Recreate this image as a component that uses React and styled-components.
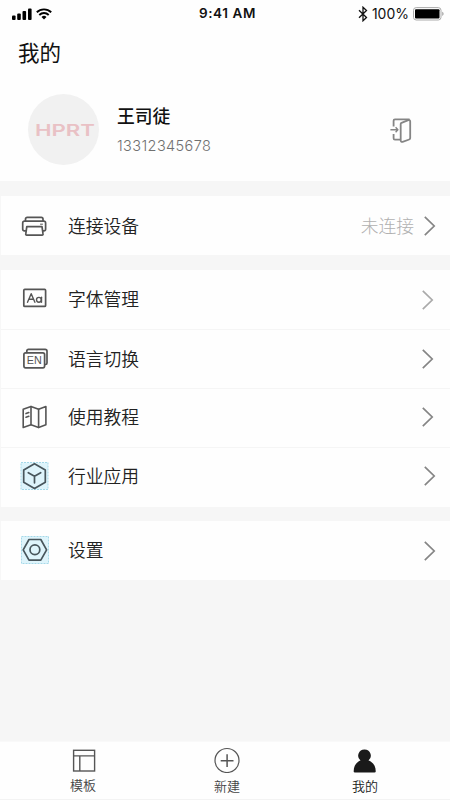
import React from 'react';
import styled, { createGlobalStyle } from 'styled-components';

const GlobalStyle = createGlobalStyle`
* {
    box-sizing: border-box;
}

body {
    margin: 0;
    background: #f6f6f6;
    font-family: "Liberation Sans", "Noto Sans CJK SC", sans-serif;
    color: #222;
}

svg {
    display: block;
    flex: none;
}
`;

const Screen = styled.div`
    display: flex;
    flex-direction: column;
    height: 800px;
    width: 450px;
    overflow: hidden;
`;

const StatusBar = styled.header`
    display: grid;
    grid-template-columns: 1fr auto 1fr;
    align-items: center;
    height: 27px;
    padding: 0 6px 0 12px;
    background: #fefefe;
    color: #111;
    font-family: Inter, "Liberation Sans", sans-serif;
    font-size: 14px;
    line-height: 27px;
`;

const Clock = styled.span`
    margin-left: -1px;
    font-weight: 600;
    font-size: 13.5px;
    letter-spacing: 0.6px;
`;

const StatusGroup = styled.div`
    display: flex;
    align-items: center;
    justify-content: ${props => props.$end ? 'flex-end' : 'flex-start'};
    gap: 4px;
`;

const Profile = styled.section`
    height: 154px;
    background: #fefefe;
`;

const Title = styled.h1`
    margin: 0;
    padding: 12px 18px 0;
    height: 66px;
    font-size: 21.5px;
    font-weight: 400;
    line-height: 31px;
    color: #111;
`;

const User = styled.div`
    display: flex;
    align-items: flex-start;
    padding: 0 37px 0 28px;
`;

const Avatar = styled.div`
    display: flex;
    align-items: center;
    justify-content: center;
    width: 71px;
    height: 71px;
    margin-top: 1px;
    border-radius: 50%;
    background: #f1f1f1;
`;

const UserText = styled.div`
    flex: 1;
    padding: 11px 0 0 18px;
`;

const UserName = styled.div`
    font-size: 17.8px;
    font-weight: 500;
    line-height: 26px;
    color: #111;
`;

const Phone = styled.div`
    padding-top: 6px;
    font-family: Inter, "Liberation Sans", sans-serif;
    font-size: 14.5px;
    font-weight: 300;
    line-height: 20px;
    letter-spacing: 0.4px;
    color: #707070;
`;

const LogoutIcon = styled.svg`
    width: 24px;
    height: 26px;
    margin-top: 25px;
    fill: none;
    stroke: #858585;
    stroke-width: 1.8;
    stroke-linejoin: round;
`;

const Group = styled.section`
    margin-top: ${props => props.$gap}px;
    background: #fefefe;
    border-left: 1px solid #f7f7f7;
`;

const Row = styled.div`
    display: flex;
    height: ${props => props.$height || 59}px;
    padding: 0 ${props => props.$right}px 0 17px;

    & + & {
        border-top: 1px solid #f5f5f5;
    }
`;

const RowIcon = styled.svg`
    width: 32px;
    height: 33px;
    margin-top: ${props => props.$first ? 13 : 12}px;
    fill: none;
    stroke: #555;
    stroke-width: 1.7;
    stroke-linejoin: round;
    stroke-linecap: round;

    text {
        fill: #555;
        stroke: none;
    }
`;

const RowLabel = styled.span`
    flex: 1;
    padding: ${props => props.$top}px 0 0 18px;
    font-size: 17.8px;
    font-weight: 350;
    line-height: 27px;
`;

const RowValue = styled.span`
    padding: 18px 10px 0 0;
    font-size: 17.8px;
    font-weight: 300;
    line-height: 27px;
    color: #b0b0b0;
`;

const ChevronIcon = styled.svg`
    width: 12px;
    height: 20px;
    margin-top: ${props => props.$top}px;
    fill: none;
    stroke: ${props => props.$pale ? '#aaa' : '#858585'};
    stroke-width: 1.7;
`;

const TabBar = styled.nav`
    display: flex;
    justify-content: space-between;
    height: 59px;
    margin-top: auto;
    padding: 0 71px 0 69px;
    background: #fefefe;
    border-top: 1px solid #f9f9f9;
    border-bottom: 1px solid #f3f3f3;
`;

const Tab = styled.div`
    display: flex;
    flex-direction: column;
    align-items: center;
    width: 28px;
    margin-left: ${props => props.$shift || 0}px;
    font-size: 13px;
    font-weight: 350;
    line-height: 18px;
    white-space: nowrap;
    color: ${props => props.$active ? '#1a1a1a' : '#444'};

    span {
        padding-top: ${props => props.$drop}px;
    }
`;

const IconTile = styled.rect`
    fill: #def4fb;
    stroke: #a5d9e9;
    stroke-width: 1;
    stroke-dasharray: 2 1;
    stroke-linejoin: miter;
    stroke-linecap: butt;
`;

const rowIcons = {
    printer: (
        <>
            <path d="M7.5 12V10a1.7 1.7 0 0 1 1.7-1.7h14.1A1.7 1.7 0 0 1 25 10v2" />
            <path d="M7.5 21.8H6.3a1.6 1.6 0 0 1-1.6-1.6v-6.3a1.7 1.7 0 0 1 1.7-1.7h19.5a1.7 1.7 0 0 1 1.7 1.7v6.3a1.6 1.6 0 0 1-1.6 1.6h-1" />
            <path d="M8.8 17.7h15.2l1 7a1 1 0 0 1-1 1.4H8.8a1 1 0 0 1-1-1.4z" />
            <path d="M22.5 15.2h2" strokeWidth="1" />
        </>
    ),
    font: (
        <>
            <rect x="5.8" y="6.4" width="21.8" height="17" rx="1" />
            <g strokeWidth="1.4">
                <path d="M9.5 19.3l3.7-8.6 3.7 8.6M10.8 16.3h4.8" />
                <circle cx="20.9" cy="16.8" r="2.4" />
                <path d="M23.5 14.3v5" />
            </g>
        </>
    ),
    language: (
        <>
            <rect x="5.9" y="10.9" width="20.7" height="14.9" rx="1.7" />
            <path d="M8.8 10.5V9a1.6 1.6 0 0 1 1.6-1.6h16.7A1.9 1.9 0 0 1 29 9.3v11.7a1.5 1.5 0 0 1-1.5 1.5h-.5" />
            <text x="16.2" y="22.2" textAnchor="middle" fontSize="10.8" fontFamily="Liberation Sans">EN</text>
        </>
    ),
    map: (
        <g strokeWidth="1.6">
            <path d="M5.2 8.2l7.8-2.6 7.6 2.6 7.3-2.6v18.2l-7.3 2.6-7.6-2.6-7.8 2.6z" />
            <path d="M13 5.6v18.2M20.6 8.2v18.2M8 12.6l2.8-1M8 16.3l2.8-1" />
        </g>
    ),
    cube: (
        <g stroke="#48565c">
            <IconTile x="3" y="2.5" width="27" height="27" />
            <path d="M16.5 3.8l10.8 6.2v12.3l-10.8 6.2-10.8-6.2V10z" />
            <path d="M10.3 12.7l6.2 3.5 6.2-3.5M16.5 16.2v6.6" />
        </g>
    ),
    settings: (
        <g stroke="#48565c">
            <IconTile x="3.5" y="2.5" width="27" height="27" />
            <path d="M11 5.5h11.8l5.8 10.3-5.8 10.3H11L5.2 15.8z" />
            <circle cx="16.9" cy="15.8" r="4.9" />
        </g>
    ),
};

const groups = [
    {
        gap: 15,
        items: [{ label: '连接设备', icon: 'printer', value: '未连接', top: 18, chevron: 20, right: 14 }],
    },
    {
        gap: 15,
        items: [
            { label: '字体管理', icon: 'font', top: 17, chevron: 20, right: 16, pale: true },
            { label: '语言切换', icon: 'language', top: 17, chevron: 19, right: 16 },
            { label: '使用教程', icon: 'map', top: 16, chevron: 18, right: 16 },
            { label: '行业应用', icon: 'cube', top: 16, chevron: 18, right: 14, height: 60 },
        ],
    },
    {
        gap: 14,
        items: [{ label: '设置', icon: 'settings', top: 17, chevron: 20, right: 14 }],
    },
];

const MenuRow = ({ item, first }) => (
    <Row $height={item.height} $right={item.right}>
        <RowIcon viewBox="0 0 32 33" $first={first}>{rowIcons[item.icon]}</RowIcon>
        <RowLabel $top={item.top}>{item.label}</RowLabel>
        {item.value && <RowValue>{item.value}</RowValue>}
        <ChevronIcon viewBox="0 0 12 20" $top={item.chevron} $pale={item.pale}>
            <path d="M.8 .8L10.2 10 .8 19.2" />
        </ChevronIcon>
    </Row>
);

const App = () => {
    return (
        <Screen>
            <GlobalStyle />
            <StatusBar>
                <StatusGroup>
                    <svg width="20" height="12" viewBox="0 0 20 12" fill="#000">
                        <rect x="0" y="7.5" width="3.6" height="4.5" rx="1" />
                        <rect x="5.2" y="5.5" width="3.6" height="6.5" rx="1" />
                        <rect x="10.5" y="3" width="3.6" height="9" rx="1" />
                        <rect x="16" y="0.5" width="3.6" height="11.5" rx="1" />
                    </svg>
                    <svg width="16" height="12" viewBox="0 0 16 12" fill="none" stroke="#000" strokeWidth="1.9">
                        <path d="M.8 4.3a10.3 10.3 0 0 1 14.4 0" />
                        <path d="M3.3 7a6.7 6.7 0 0 1 9.4 0" />
                        <path d="M8 11.6L5.5 9.1a3.5 3.5 0 0 1 5 0z" fill="#000" stroke="none" />
                    </svg>
                </StatusGroup>
                <Clock>9:41 AM</Clock>
                <StatusGroup $end>
                    <svg width="10" height="16" viewBox="0 0 10 16" fill="none" stroke="#111" strokeWidth="1.3">
                        <path d="M1 4.3l7.5 7.3L5 14.8V1.2l3.5 3.2L1 11.7" />
                    </svg>
                    <span>100%</span>
                    <svg width="31" height="14" viewBox="0 0 31 14">
                        <rect x="0.5" y="0.6" width="27.5" height="12.4" rx="2.7" fill="#fff" stroke="#aaa" />
                        <rect x="2" y="2.2" width="24.5" height="9.2" rx="1" fill="#000" />
                        <path d="M29.3 4.8c1.6.5 1.6 3.6 0 4.2z" fill="#999" />
                    </svg>
                </StatusGroup>
            </StatusBar>

            <Profile>
                <Title>我的</Title>
                <User>
                    <Avatar>
                        <svg width="71" height="28" viewBox="0 0 71 28">
                            <text x="7" y="20.3" textLength="60" lengthAdjust="spacingAndGlyphs" fontSize="16.5" fontWeight="600" fontFamily="Inter" fill="#e9c1c5">HPRT</text>
                        </svg>
                    </Avatar>
                    <UserText>
                        <UserName>王司徒</UserName>
                        <Phone>13312345678</Phone>
                    </UserText>
                    <LogoutIcon viewBox="0 0 24 26">
                        <path d="M4.6 8.5V2.8a1.4 1.4 0 0 1 1.4-1.4h14.6" />
                        <path d="M4.6 16v4.2A1.4 1.4 0 0 0 6 21.6h5.3" />
                        <path d="M12.5 4.8l6.8-2.7a1.4 1.4 0 0 1 1.9 1.3v16.7a1.5 1.5 0 0 1-1 1.4l-6.6 2.3a1.4 1.4 0 0 1-1.9-1.3V6.1a1.4 1.4 0 0 1 .8-1.3z" />
                        <path d="M1.4 11.7h7M6.6 9.2l2.3 2.5-2.3 2.5" strokeWidth="1.4" />
                    </LogoutIcon>
                </User>
            </Profile>

            {groups.map((group, index) => (
                <Group key={index} $gap={group.gap}>
                    {group.items.map((item, i) => (
                        <MenuRow key={item.label} item={item} first={i === 0} />
                    ))}
                </Group>
            ))}

            <TabBar>
                <Tab $drop={4}>
                    <svg width="28" height="31" viewBox="0 0 28 31" fill="none" stroke="#555" strokeWidth="1.4">
                        <rect x="4.6" y="8.3" width="21" height="20.7" />
                        <path d="M4.6 13.9h21M10.8 13.9v15" />
                    </svg>
                    <span>模板</span>
                </Tab>
                <Tab $drop={5} $shift={6}>
                    <svg width="28" height="31" viewBox="0 0 28 31" fill="none" stroke="#555" strokeWidth="1.2">
                        <circle cx="14" cy="18.5" r="12" />
                        <path d="M7.7 18.7h12.8M14.1 12.3v12.8" strokeWidth="1.5" />
                    </svg>
                    <span>新建</span>
                </Tab>
                <Tab $active $drop={5}>
                    <svg width="28" height="31" viewBox="0 0 28 31" fill="#1a1a1a">
                        <path d="M13.5 7.5a6.2 6.2 0 0 1 4 11c4.5 1.5 7.2 5.500 7.200 10.500a1.300 1.300 0 0 1-1.300 1.500H4a1.300 1.300 0 0 1-1.300-1.500c0-5 2.700-9 6.800-10.500a6.200 6.200 0 0 1 4-11z" />
                    </svg>
                    <span>我的</span>
                </Tab>
            </TabBar>
        </Screen>
    );
};

export default App;
